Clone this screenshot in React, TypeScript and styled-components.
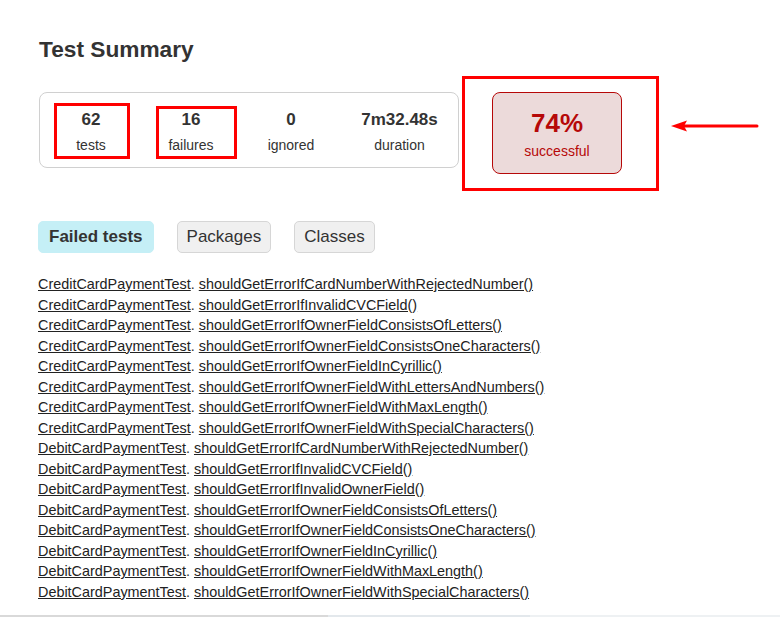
import React from "react";
import styled, { createGlobalStyle } from "styled-components";

const Global = createGlobalStyle`
  html, body { margin: 0; padding: 0; background: #fff; }
  body { font-family: "Liberation Sans", Arial, sans-serif; color: #333; }
`;

const Page = styled.div`
  display: flex;
  flex-direction: column;
`;

const Content = styled.div`
  padding: 36px 0 0 38px;
  display: flex;
  flex-direction: column;
`;

const Title = styled.h1`
  margin: 0 0 0 1px;
  font-size: 22.7px;
  line-height: 26px;
  font-weight: bold;
  color: #333;
`;

const SummaryRow = styled.div`
  margin-top: 14px;
  display: flex;
  align-items: flex-start;
`;

const SummaryBox = styled.div`
  margin: 16px 0 0 1px;
  width: 420px;
  box-sizing: border-box;
  border: 1px solid #d0d0d0;
  border-radius: 8px;
  padding-left: 1px;
  display: grid;
  grid-template-columns: 100px 100px 100px 1fr;
`;

const Counter = styled.div`
  position: relative;
  display: flex;
  flex-direction: column;
  align-items: center;
  padding: 17px 0 12px;
  gap: 5px;
`;

const CounterValue = styled.div`
  font-size: 17px;
  line-height: 20px;
  font-weight: bold;
`;

const CounterLabel = styled.div`
  font-size: 14px;
  line-height: 20px;
`;

const Mark = styled.div<{ $l: number; $t: number; $w: number; $h: number }>`
  position: absolute;
  left: ${(p) => p.$l}px;
  top: ${(p) => p.$t}px;
  width: ${(p) => p.$w}px;
  height: ${(p) => p.$h}px;
  box-sizing: border-box;
  border: 3px solid #ff0000;
  pointer-events: none;
`;

const Highlight = styled.div`
  margin-left: 3px;
  width: 197px;
  height: 115px;
  box-sizing: border-box;
  border: 3px solid #ff0000;
  padding: 13px 0 0 27px;
`;

const RateBox = styled.div`
  width: 130px;
  height: 82px;
  box-sizing: border-box;
  border: 1px solid #b60808;
  border-radius: 8px;
  background: #ecdada;
  color: #b60808;
  display: flex;
  flex-direction: column;
  align-items: center;
  padding-top: 15px;
  gap: 3px;
`;

const RateValue = styled.div`
  font-size: 26px;
  line-height: 30px;
  font-weight: bold;
`;

const RateLabel = styled.div`
  font-size: 14px;
  line-height: 20px;
`;

const Arrow = styled.svg`
  margin: 43px 0 0 12px;
  flex: none;
`;

const Tabs = styled.ul`
  list-style: none;
  margin: 30px 0 0;
  padding: 0;
  display: flex;
  gap: 23px;
`;

const Tab = styled.li<{ $selected?: boolean }>`
  height: 32px;
  box-sizing: border-box;
  padding: 0 ${(p) => (p.$selected ? 10 : 9)}px;
  display: flex;
  align-items: center;
  font-size: 17px;
  border-radius: 5px;
  border: 1px solid ${(p) => (p.$selected ? "#c5eff6" : "#d6d6d6")};
  background: ${(p) => (p.$selected ? "#c5eff6" : "#f0f0f0")};
  font-weight: ${(p) => (p.$selected ? "bold" : "normal")};
  color: #333;
`;

const List = styled.ul`
  list-style: none;
  margin: 21px 0 0;
  padding: 0;
`;

const Item = styled.li`
  font-size: 14.4px;
  line-height: 20.5px;
  color: #333;
  white-space: nowrap;
`;

const Link = styled.a`
  color: #222;
  text-decoration: underline;
`;

const BottomBar = styled.div`
  margin-top: 13px;
  height: 2px;
  background: linear-gradient(to right, #d9d9d9 0%, #d9d9d9 42%, #e3e8ec 42%, #e3e8ec 68%, #eef1f3 68%);
`;

const failed: [string, string][] = [
  ["CreditCardPaymentTest", "shouldGetErrorIfCardNumberWithRejectedNumber()"],
  ["CreditCardPaymentTest", "shouldGetErrorIfInvalidCVCField()"],
  ["CreditCardPaymentTest", "shouldGetErrorIfOwnerFieldConsistsOfLetters()"],
  ["CreditCardPaymentTest", "shouldGetErrorIfOwnerFieldConsistsOneCharacters()"],
  ["CreditCardPaymentTest", "shouldGetErrorIfOwnerFieldInCyrillic()"],
  ["CreditCardPaymentTest", "shouldGetErrorIfOwnerFieldWithLettersAndNumbers()"],
  ["CreditCardPaymentTest", "shouldGetErrorIfOwnerFieldWithMaxLength()"],
  ["CreditCardPaymentTest", "shouldGetErrorIfOwnerFieldWithSpecialCharacters()"],
  ["DebitCardPaymentTest", "shouldGetErrorIfCardNumberWithRejectedNumber()"],
  ["DebitCardPaymentTest", "shouldGetErrorIfInvalidCVCField()"],
  ["DebitCardPaymentTest", "shouldGetErrorIfInvalidOwnerField()"],
  ["DebitCardPaymentTest", "shouldGetErrorIfOwnerFieldConsistsOfLetters()"],
  ["DebitCardPaymentTest", "shouldGetErrorIfOwnerFieldConsistsOneCharacters()"],
  ["DebitCardPaymentTest", "shouldGetErrorIfOwnerFieldInCyrillic()"],
  ["DebitCardPaymentTest", "shouldGetErrorIfOwnerFieldWithMaxLength()"],
  ["DebitCardPaymentTest", "shouldGetErrorIfOwnerFieldWithSpecialCharacters()"],
];

export default function App() {
  return (
    <Page>
      <Global />
      <Content>
        <Title>Test Summary</Title>
        <SummaryRow>
          <SummaryBox>
            <Counter>
              <CounterValue>62</CounterValue>
              <CounterLabel>tests</CounterLabel>
              <Mark $l={13} $t={10} $w={76} $h={56} />
            </Counter>
            <Counter>
              <CounterValue>16</CounterValue>
              <CounterLabel>failures</CounterLabel>
              <Mark $l={15} $t={13} $w={81} $h={53} />
            </Counter>
            <Counter>
              <CounterValue>0</CounterValue>
              <CounterLabel>ignored</CounterLabel>
            </Counter>
            <Counter>
              <CounterValue>7m32.48s</CounterValue>
              <CounterLabel>duration</CounterLabel>
            </Counter>
          </SummaryBox>
          <Highlight>
            <RateBox>
              <RateValue>74%</RateValue>
              <RateLabel>successful</RateLabel>
            </RateBox>
          </Highlight>
          <Arrow width="88" height="14" viewBox="0 0 88 14">
            <line x1="12" y1="7" x2="86" y2="7" stroke="#ff0000" strokeWidth="3" strokeLinecap="round" />
            <polygon points="0,7 16,1.5 13,7 16,12.5" fill="#ff0000" />
          </Arrow>
        </SummaryRow>
        <Tabs>
          <Tab $selected>Failed tests</Tab>
          <Tab>Packages</Tab>
          <Tab>Classes</Tab>
        </Tabs>
        <List>
          {failed.map(([cls, method], i) => (
            <Item key={i}>
              <Link href="#">{cls}</Link>. <Link href="#">{method}</Link>
            </Item>
          ))}
        </List>
      </Content>
      <BottomBar />
    </Page>
  );
}
